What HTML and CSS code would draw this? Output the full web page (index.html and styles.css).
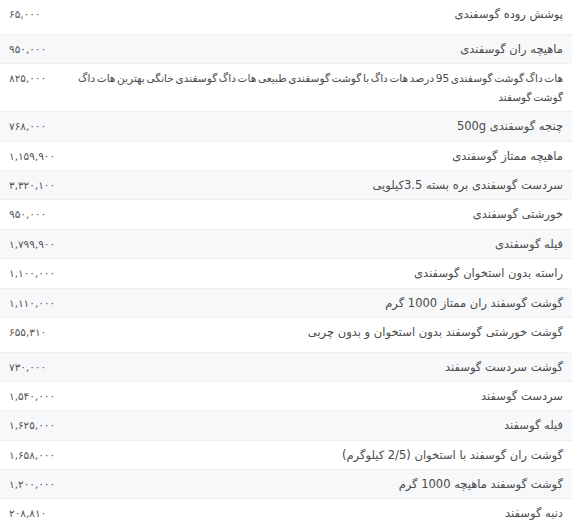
FILE: index.html
```html
<!DOCTYPE html>
<html lang="fa" dir="rtl">
<head>
<meta charset="utf-8">
<link rel="stylesheet" href="styles.css">
</head>
<body>
<table class="prices">
<tbody>
<tr class="extra"><td class="name">پوشش روده گوسفندی</td><td class="price" dir="ltr">۶۵,۰۰۰</td></tr>
<tr><td class="name">ماهیچه ران گوسفندی</td><td class="price" dir="ltr">۹۵۰,۰۰۰</td></tr>
<tr><td class="name name-long">هات داگ گوشت گوسفندی 95 درصد هات داگ با گوشت گوسفندی طبیعی هات داگ گوسفندی خانگی بهترین هات داگ گوشت گوسفند</td><td class="price" dir="ltr">۸۲۵,۰۰۰</td></tr>
<tr><td class="name">چنجه گوسفندی 500g</td><td class="price" dir="ltr">۷۶۸,۰۰۰</td></tr>
<tr><td class="name">ماهیچه ممتاز گوسفندی</td><td class="price" dir="ltr">۱,۱۵۹,۹۰۰</td></tr>
<tr><td class="name">سردست گوسفندی بره بسته 3.5کیلویی</td><td class="price" dir="ltr">۳,۳۲۰,۱۰۰</td></tr>
<tr><td class="name">خورشتی گوسفندی</td><td class="price" dir="ltr">۹۵۰,۰۰۰</td></tr>
<tr><td class="name">فیله گوسفندی</td><td class="price" dir="ltr">۱,۷۹۹,۹۰۰</td></tr>
<tr><td class="name">راسته بدون استخوان گوسفندی</td><td class="price" dir="ltr">۱,۱۰۰,۰۰۰</td></tr>
<tr><td class="name">گوشت گوسفند ران ممتاز 1000 گرم</td><td class="price" dir="ltr">۱,۱۱۰,۰۰۰</td></tr>
<tr class="extra"><td class="name">گوشت خورشتی گوسفند بدون استخوان و بدون چربی</td><td class="price" dir="ltr">۶۵۵,۳۱۰</td></tr>
<tr><td class="name">گوشت سردست گوسفند</td><td class="price" dir="ltr">۷۳۰,۰۰۰</td></tr>
<tr><td class="name">سردست گوسفند</td><td class="price" dir="ltr">۱,۵۴۰,۰۰۰</td></tr>
<tr><td class="name">فیله گوسفند</td><td class="price" dir="ltr">۱,۶۲۵,۰۰۰</td></tr>
<tr><td class="name">گوشت ران گوسفند با استخوان (2/5 کیلوگرم)</td><td class="price" dir="ltr">۱,۶۵۸,۰۰۰</td></tr>
<tr><td class="name">گوشت گوسفند ماهیچه 1000 گرم</td><td class="price" dir="ltr">۱,۲۰۰,۰۰۰</td></tr>
<tr><td class="name">دنبه گوسفند</td><td class="price" dir="ltr">۲۰۸,۸۱۰</td></tr>
</tbody>
</table>
</body>
</html>
```

FILE: styles.css
```css
html, body {
  margin: 0;
  padding: 0;
  background: #ffffff;
}
body {
  font-family: "DejaVu Sans", sans-serif;
  color: #4a4a4a;
}
.prices {
  width: 100%;
  border-collapse: collapse;
  direction: rtl;
}
.prices tr {
  border-bottom: 1px solid #eceef1;
}
.prices tr:nth-child(even) {
  background: #f7f8fa;
}
.prices td {
  padding: 5px 9px 4.4px 9px;
  line-height: 19px;
  vertical-align: top;
}
.prices tr.extra td {
  padding-bottom: 9.5px;
}
.name {
  text-align: right;
  font-size: 11.5px;
}
.name-long {
  font-size: 10.6px;
  word-spacing: -1.8px;
  padding-left: 4px;
}
.price {
  width: 1%;
  white-space: nowrap;
  text-align: left;
  font-size: 10.5px;
  color: #555;
  padding-left: 10px;
}
```
